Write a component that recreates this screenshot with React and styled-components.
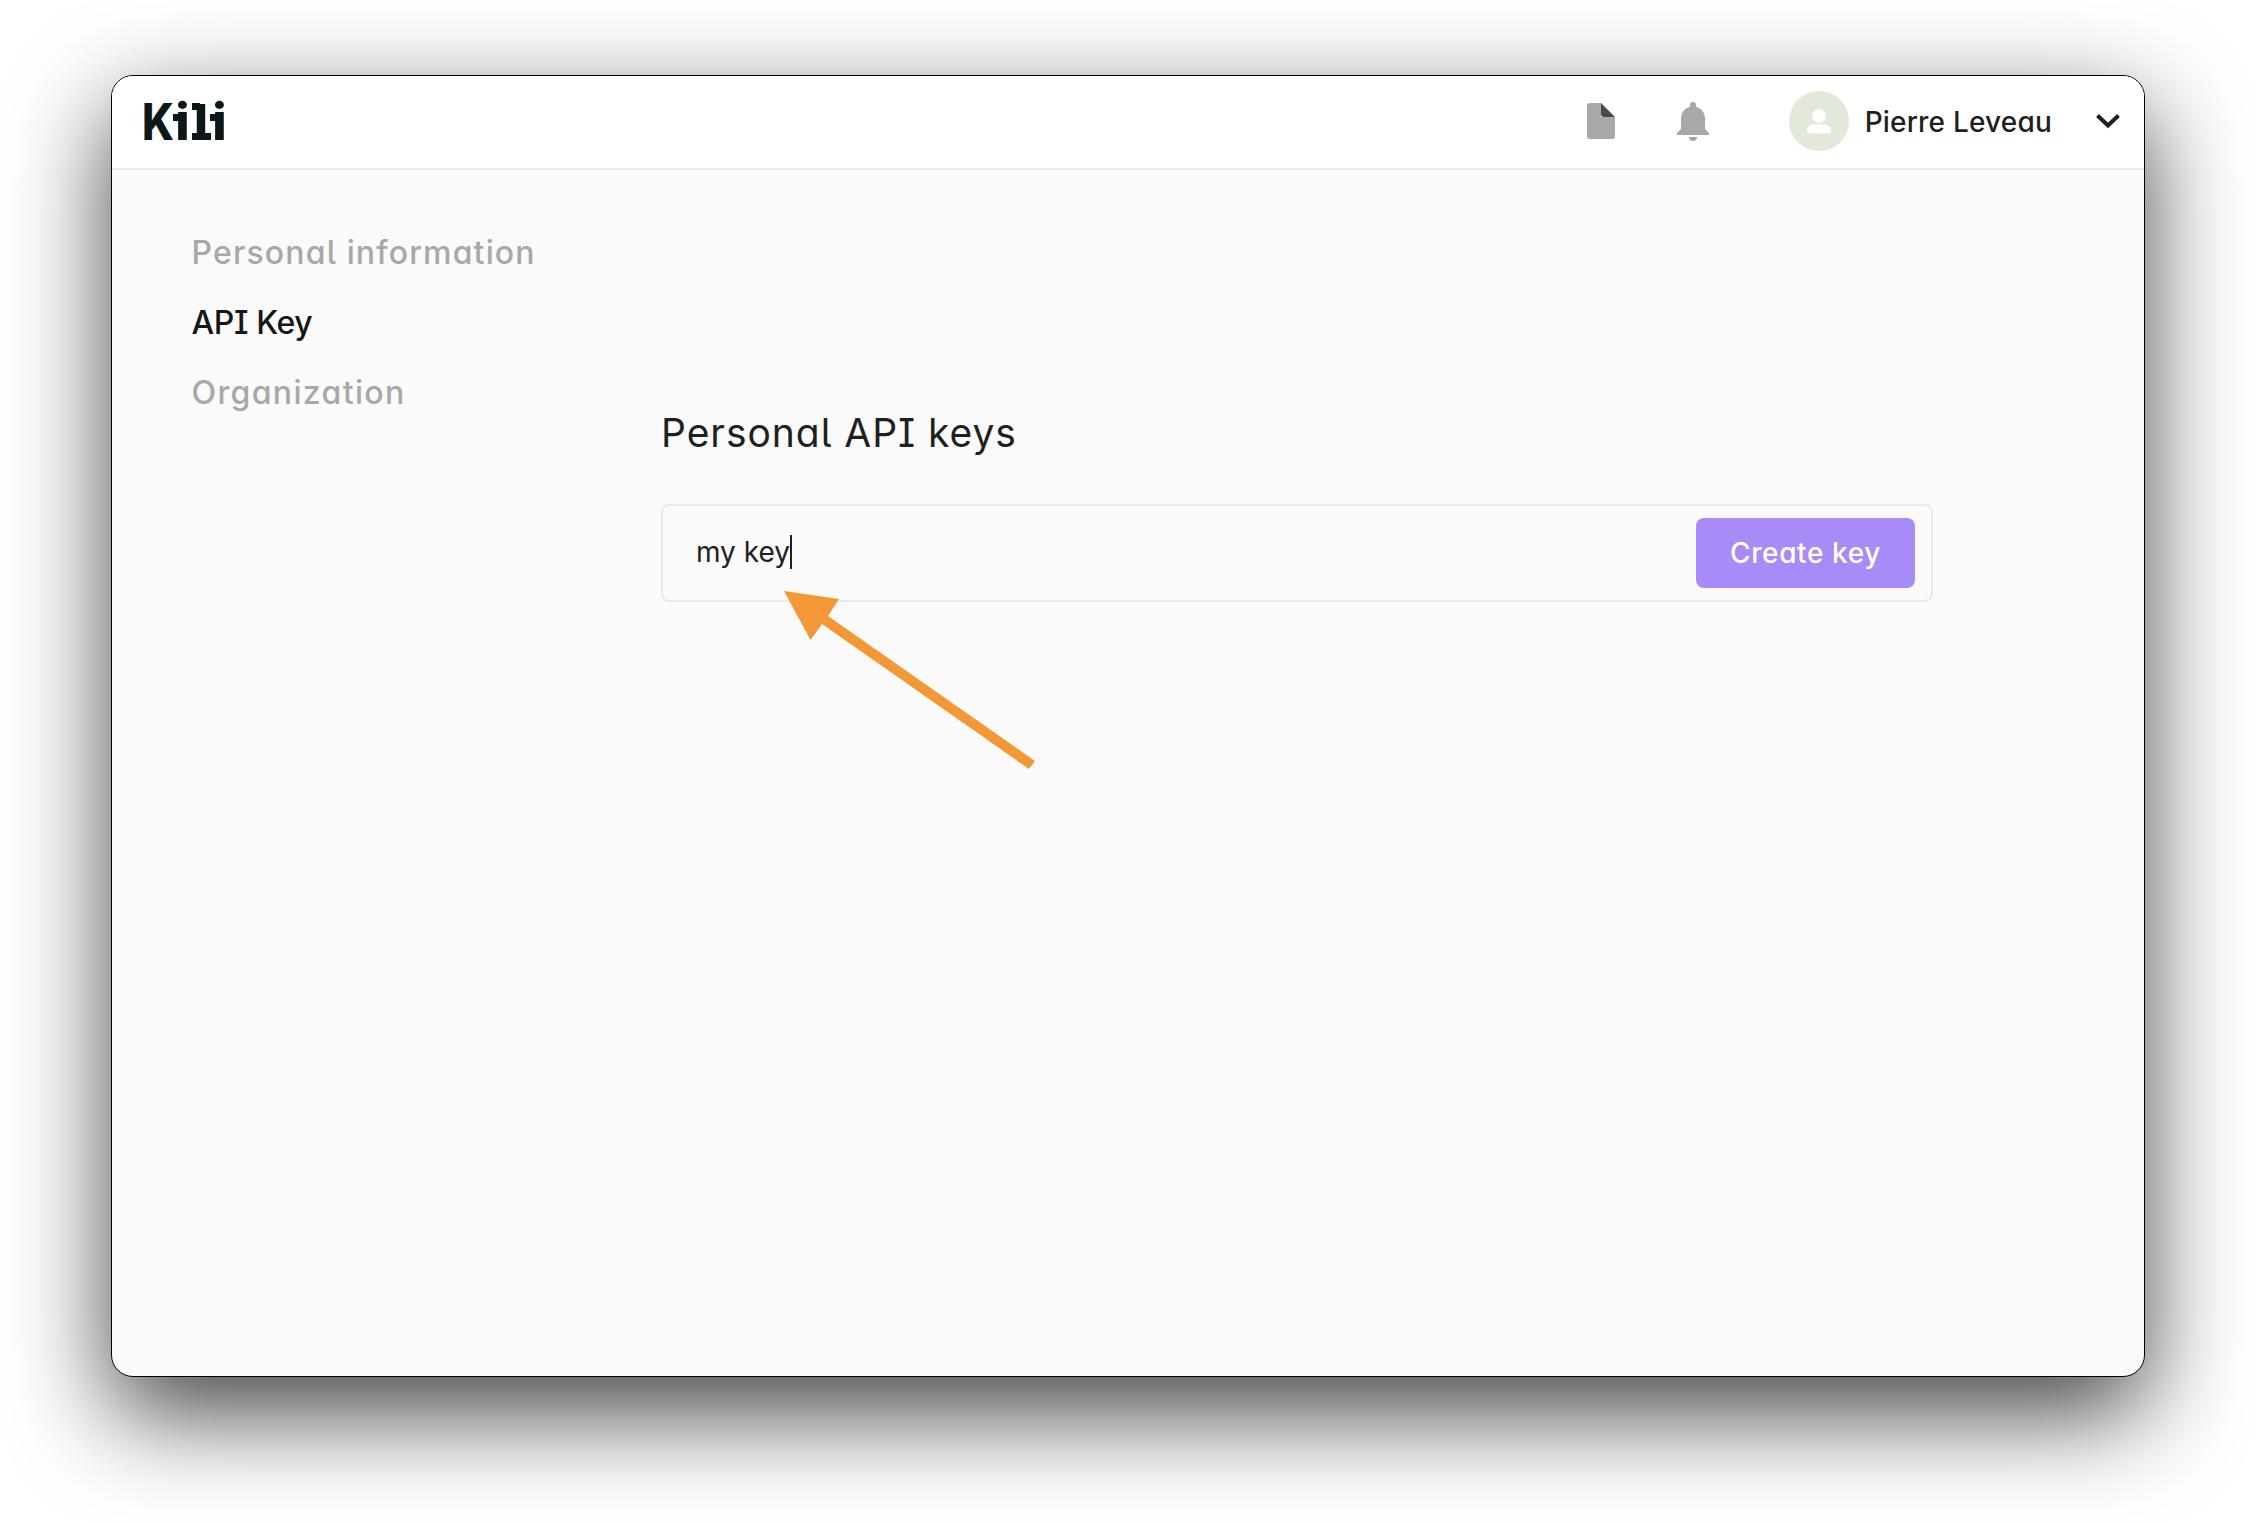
import React from "react";
import styled, { createGlobalStyle } from "styled-components";

const GlobalStyle = createGlobalStyle`
  *, *::before, *::after { box-sizing: border-box; }
  body {
    margin: 0;
    background: #fff;
    font-family: Inter, "Liberation Sans", sans-serif;
    font-feature-settings: "cv11", "cv08", "cv05";
    color: #1f1f1f;
  }
`;

const Desktop = styled.div`
  width: 2256px;
  height: 1524px;
  padding: 75px 111px 147px;
  overflow: hidden;
`;

const Window = styled.div`
  position: relative;
  height: 1302px;
  display: flex;
  flex-direction: column;
  border: 1px solid #000;
  border-radius: 22px;
  background: #fafafa;
  box-shadow: 0 36px 100px rgba(0, 0, 0, 0.74);
`;

const Header = styled.header`
  height: 94px;
  padding: 0 24px 2px 32px;
  display: flex;
  align-items: center;
  border-bottom: 2px solid #e9e9e9;
  border-radius: 21px 21px 0 0;
  background: #fff;
`;

const Logo = styled.div`
  display: flex;
  align-items: baseline;
  margin-right: auto;
  padding-top: 2px;
  color: #0b1718;
  font: 800 51px/60px Inter, sans-serif;
  font-feature-settings: normal;
`;

const LogoK = styled.span`
  width: 34px;
  text-indent: -2.5px;
  transform: scaleX(0.85);
  transform-origin: 0 50%;
`;

const LogoI = styled.span`
  position: relative;
  width: 9px;
  display: flex;
  justify-content: center;

  &::before {
    content: "";
    position: absolute;
    left: -5px;
    top: 22px;
    width: 8px;
    height: 7px;
    background: currentColor;
  }
`;

const LogoL = styled.span`
  position: relative;
  width: 9px;
  margin: 0 9.5px;
  display: flex;
  justify-content: center;
  font-size: 49.5px;

  &::before,
  &::after {
    content: "";
    position: absolute;
    left: -5px;
    height: 7px;
    background: currentColor;
  }
  &::before {
    top: 11px;
    width: 8px;
  }
  &::after {
    top: 41px;
    width: 19px;
  }
`;

const IconButton = styled.button`
  display: flex;
  padding: 0;
  border: 0;
  background: none;
  margin-right: ${(p) => p.$gap}px;
`;

const Avatar = styled.div`
  width: 60px;
  height: 60px;
  display: flex;
  justify-content: center;
  align-items: center;
  border-radius: 50%;
  background: #e2e9db;
`;

const Text = styled.span`
  display: block;
  font-size: ${(p) => p.$size}px;
  font-weight: ${(p) => p.$weight || 400};
  letter-spacing: ${(p) => p.$track || 0}px;
  white-space: nowrap;
`;

const UserName = styled.div`
  margin: 0 44px 0 16px;
  padding-top: 1px;
  line-height: 40px;
`;

const Body = styled.div`
  flex: 1;
  display: flex;
`;

const Nav = styled.nav`
  width: 549px;
  padding: 48px 0 0 79.5px;
`;

const NavItem = styled.div`
  height: 70px;
  line-height: 70px;
  color: ${(p) => (p.$active ? "#161616" : "#a8a8a8")};
`;

const Main = styled.main`
  width: 1272px;
  padding-top: 233px;
`;

const Title = styled.h1`
  margin: 0 0 41px;
  line-height: 60px;
`;

const KeyForm = styled.div`
  height: 98px;
  padding: 0 16px 0 33px;
  display: flex;
  align-items: center;
  border: 2px solid #e9e9e9;
  border-radius: 8px;
`;

const KeyInput = styled.div`
  display: flex;
  align-items: center;
  margin-right: auto;
  padding-bottom: 2px;
`;

const Caret = styled.i`
  width: 2px;
  height: 34px;
  background: #1f1f1f;
`;

const CreateButton = styled.button`
  width: 219px;
  height: 70px;
  padding: 0;
  border: 0;
  border-radius: 8px;
  background: #a78bf6;
  color: #fff;
  font-family: inherit;
  font-feature-settings: inherit;
  text-align: center;
`;

const Arrow = styled.svg`
  position: absolute;
  left: 672px;
  top: 515px;
`;

export default function App() {
  return (
    <>
      <GlobalStyle />
      <Desktop>
        <Window>
          <Header>
            <Logo>
              <LogoK>K</LogoK>
              <LogoI>i</LogoI>
              <LogoL>l</LogoL>
              <LogoI>i</LogoI>
            </Logo>
            <IconButton $gap={62} aria-label="Documentation">
              <svg width="28" height="36" viewBox="0 0 28 36">
                <path d="M3 0H14V14H28V33a3 3 0 0 1-3 3H3a3 3 0 0 1-3-3V3a3 3 0 0 1 3-3z" fill="#a8a8a8" />
                <path d="M14 0L28 14H17a3 3 0 0 1-3-3z" fill="#4a4a4a" />
              </svg>
            </IconButton>
            <IconButton $gap={80} aria-label="Notifications">
              <svg width="32" height="39" viewBox="0 0 32 39" fill="#a8a8a8">
                <path d="M16 0a3 3 0 0 1 3 3v1.8C24.500 6.200 28 11 28 16.500V27l4 4v2H0v-2l4-4V16.500C4 11 7.500 6.200 13 4.800V3a3 3 0 0 1 3-3zM12 35h8a4 4 0 0 1-8 0z" />
              </svg>
            </IconButton>
            <Avatar>
              <svg width="24" height="25" viewBox="0 0 24 25" fill="#fff">
                <circle cx="12" cy="7" r="7" />
                <path d="M0 22c0-4 3-6.500 7-6.500h10c4 0 7 2.500 7 6.500a2.500 2.500 0 0 1-2.500 2.500h-19A2.500 2.500 0 0 1 0 22z" />
              </svg>
            </Avatar>
            <UserName>
              <Text $size={28} $weight={500} $track={0.2}>Pierre Leveau</Text>
            </UserName>
            <svg width="24" height="16" viewBox="0 0 24 16" fill="none" stroke="#1f1f1f" strokeWidth="4">
              <path d="M1.500 2.500L12 12.500L22.500 2.500" />
            </svg>
          </Header>
          <Body>
            <Nav>
              <NavItem><Text $size={32} $weight={500} $track={1.15}>Personal information</Text></NavItem>
              <NavItem $active><Text $size={32} $weight={500} $track={-0.4}>API Key</Text></NavItem>
              <NavItem><Text $size={32} $weight={500} $track={1.35}>Organization</Text></NavItem>
            </Nav>
            <Main>
              <Title><Text $size={39} $track={0.95}>Personal API keys</Text></Title>
              <KeyForm>
                <KeyInput>
                  <Text $size={28}>my key</Text>
                  <Caret />
                </KeyInput>
                <CreateButton><Text $size={28} $weight={500} $track={0.6}>Create key</Text></CreateButton>
              </KeyForm>
            </Main>
          </Body>
          <Arrow width="256" height="182" viewBox="0 0 256 182">
            <path d="M0 0L55 8L44 25L251 170L245 178L38 33L26.500 49z" fill="#f29837" />
          </Arrow>
        </Window>
      </Desktop>
    </>
  );
}
